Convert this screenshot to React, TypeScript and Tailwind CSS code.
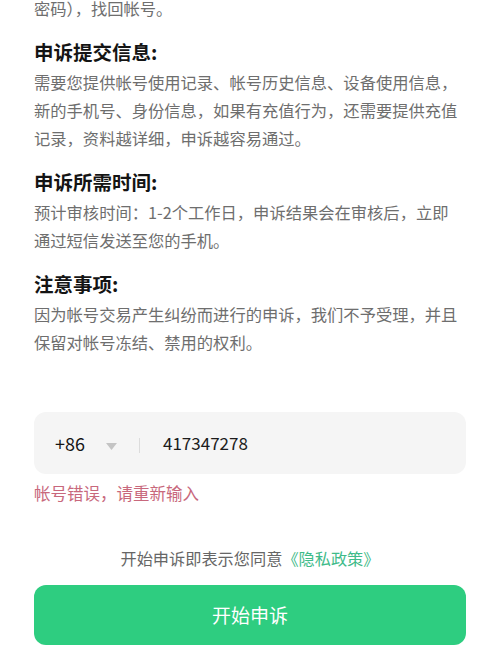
import React from "react";

const FONT = { fontFamily: '"Noto Sans CJK SC", "Noto Sans", sans-serif' };

const sections = [
  {
    title: "申诉提交信息:",
    lines: [
      "需要您提供帐号使用记录、帐号历史信息、设备使用信息，",
      "新的手机号、身份信息，如果有充值行为，还需要提供充值",
      "记录，资料越详细，申诉越容易通过。",
    ],
  },
  {
    title: "申诉所需时间:",
    lines: [
      "预计审核时间：1-2个工作日，申诉结果会在审核后，立即",
      "通过短信发送至您的手机。",
    ],
  },
  {
    title: "注意事项:",
    lines: [
      "因为帐号交易产生纠纷而进行的申诉，我们不予受理，并且",
      "保留对帐号冻结、禁用的权利。",
    ],
  },
];

function Section({ title, lines }: { title: string; lines: string[] }) {
  return (
    <section className="mt-[15px]">
      <h2 className="text-[19.5px] font-semibold leading-[30px] text-[#141414]">{title}</h2>
      <p className="mt-[1px] text-[16.3px] leading-[28px] text-[#6e6e6e]">
        {lines.map((l, i) => (
          <span key={i} className="block whitespace-nowrap">
            {l}
          </span>
        ))}
      </p>
    </section>
  );
}

export default function App() {
  return (
    <div className="h-[667px] w-[500px] overflow-hidden bg-white px-[34px]" style={FONT}>
      <p className="mt-[-6px] text-[16.3px] leading-[28px] text-[#6e6e6e]">密码），找回帐号。</p>

      {sections.map(s => (
        <Section key={s.title} title={s.title} lines={s.lines} />
      ))}

      <div className="mt-[56px] flex h-[62px] items-center rounded-xl bg-[#f5f5f5] pl-[21px]">
        <span className="text-[18px] text-[#161616]">+86</span>
        <svg className="ml-[21px] mt-[6px]" width="11" height="7" viewBox="0 0 11 7">
          <path d="M0 0 H11 L5.5 7 Z" fill="#c4c4c4" />
        </svg>
        <span className="ml-[22px] mt-[4px] h-[15px] w-px bg-[#dcdcdc]" />
        <span className="ml-[23px] text-[17px] text-[#1c1c1c]">417347278</span>
      </div>

      <p className="mt-[7px] text-[16.5px] leading-[24px] text-[#c8687c]">帐号错误，请重新输入</p>

      <p className="mt-[41px] text-center text-[16.2px] leading-[24px] text-[#666666]">
        开始申诉即表示您同意<span className="text-[#3fbb8a]">《隐私政策》</span>
      </p>

      <button className="mt-[15px] flex h-[60px] w-full items-center justify-center rounded-xl bg-[#2ecd80] text-[19px] text-white">
        开始申诉
      </button>
    </div>
  );
}
